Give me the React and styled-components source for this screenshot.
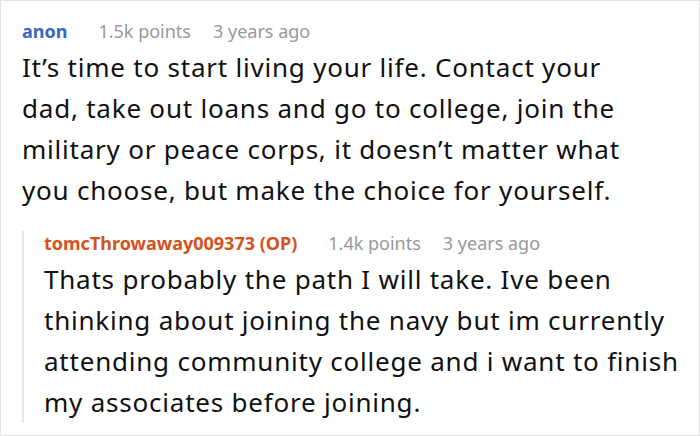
import styled, { createGlobalStyle } from 'styled-components';

const GlobalStyle = createGlobalStyle`
  html, body {
    margin: 0;
    padding: 0;
    background: #fff;
  }
  body {
    font-family: "Noto Sans", "Open Sans", sans-serif;
  }
`;

const Frame = styled.div`
  box-sizing: border-box;
  width: 700px;
  height: 436px;
  border: 1px solid #e2e2e2;
  padding: 18px 0 0 21px;
  overflow: hidden;
`;

const Comment = styled.div`
  display: flex;
  flex-direction: column;
`;

const Meta = styled.div`
  display: flex;
  align-items: baseline;
  gap: 22px;
  font-size: 18px;
  line-height: 24px;
  color: #999;
  white-space: nowrap;
`;

const Author = styled.span`
  font-weight: 700;
  color: ${(p) => (p.$op ? '#d4521c' : '#3867c4')};
  margin-right: 9px;
`;

const Body = styled.p`
  margin: 4px 0 0;
  font-size: 26px;
  letter-spacing: 0.78px;
  line-height: 41px;
  color: #111;
  white-space: nowrap;
`;

const Replies = styled.div`
  margin-top: 20px;
  padding-left: 20px;
  border-left: 2px solid #e6e6e6;
`;

const App = () => (
  <>
    <GlobalStyle />
    <Frame>
      <Comment>
        <Meta>
          <Author>anon</Author>
          <span>1.5k points</span>
          <span>3 years ago</span>
        </Meta>
        <Body>
          It’s time to start living your life. Contact your
          <br />
          dad, take out loans and go to college, join the
          <br />
          military or peace corps, it doesn’t matter what
          <br />
          you choose, but make the choice for yourself.
        </Body>
        <Replies>
          <Meta>
            <Author $op>tomcThrowaway009373 (OP)</Author>
            <span>1.4k points</span>
            <span>3 years ago</span>
          </Meta>
          <Body>
            Thats probably the path I will take. Ive been
            <br />
            thinking about joining the navy but im currently
            <br />
            attending community college and i want to finish
            <br />
            my associates before joining.
          </Body>
        </Replies>
      </Comment>
    </Frame>
  </>
);

export default App;
